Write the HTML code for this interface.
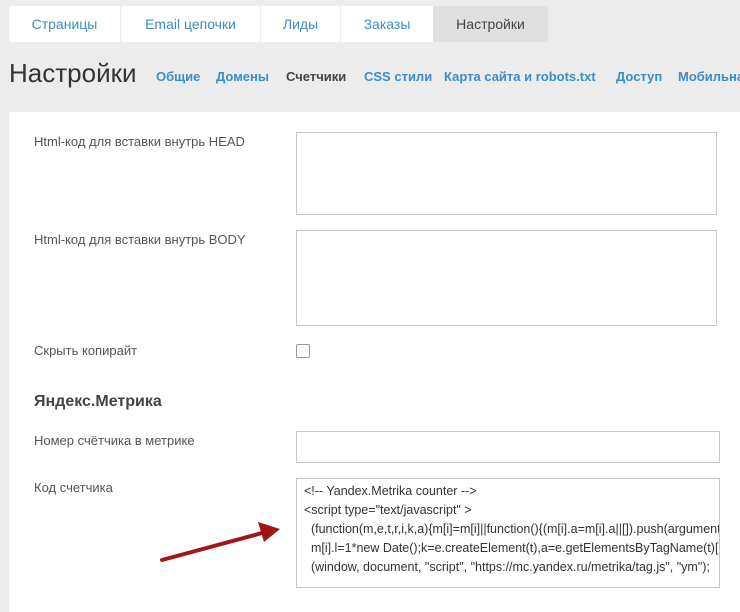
<!DOCTYPE html><html><head><meta charset="utf-8"><style>
body{margin:0;width:740px;height:600px;background:#ececec;font-family:"Liberation Sans",sans-serif;position:relative;overflow:hidden;}
.tab{position:absolute;top:6px;height:36px;line-height:36px;background:#fff;color:#3c8dc9;font-size:14px;text-align:center;}
.a{position:absolute;}
.lbl{position:absolute;left:34px;font-size:13px;color:#555;}
.ta{position:absolute;background:#fff;border:1px solid #c8c8c8;box-sizing:border-box;}
.sub{position:absolute;top:69px;font-size:13px;font-weight:bold;color:#3c8dc9;}
</style></head><body>
<div class="tab" style="left:9px;width:111px">Страницы</div>
<div class="tab" style="left:121px;width:139px">Email цепочки</div>
<div class="tab" style="left:261px;width:79px">Лиды</div>
<div class="tab" style="left:341px;width:92px">Заказы</div>
<div class="tab" style="left:433px;width:115px;background:#e0e0e0;color:#444">Настройки</div>
<div class="a" style="left:9px;top:58px;font-size:26px;color:#333">Настройки</div>
<div class="sub" style="left:156px">Общие</div>
<div class="sub" style="left:216px">Домены</div>
<div class="sub" style="left:286px;color:#444">Счетчики</div>
<div class="sub" style="left:364px">CSS стили</div>
<div class="sub" style="left:444px">Карта сайта и robots.txt</div>
<div class="sub" style="left:616px">Доступ</div>
<div class="sub" style="left:678px;white-space:nowrap">Мобильная</div>
<div class="a" style="left:9px;top:112px;width:740px;height:500px;background:#fff"></div>
<div class="lbl" style="top:134px">Html-код для вставки внутрь HEAD</div>
<div class="ta" style="left:296px;top:132px;width:421px;height:83px"></div>
<div class="lbl" style="top:232px">Html-код для вставки внутрь BODY</div>
<div class="ta" style="left:296px;top:230px;width:421px;height:96px"></div>
<div class="lbl" style="top:343px">Скрыть копирайт</div>
<div class="ta" style="left:296px;top:344px;width:14px;height:14px;border-color:#999;border-radius:2px"></div>
<div class="lbl" style="top:393px;font-size:16px;font-weight:bold;color:#444">Яндекс.Метрика</div>
<div class="lbl" style="top:433px">Номер счётчика в метрике</div>
<div class="ta" style="left:296px;top:431px;width:424px;height:32px"></div>
<div class="lbl" style="top:480px">Код счетчика</div>
<div class="ta" style="left:296px;top:478px;width:424px;height:110px;overflow:hidden;padding:3px 7px;font-size:12.5px;line-height:19px;color:#333;white-space:pre">&lt;!-- Yandex.Metrika counter --&gt;
&lt;script type="text/javascript" &gt;
  (function(m,e,t,r,i,k,a){m[i]=m[i]||function(){(m[i].a=m[i].a||[]).push(arguments)};
  m[i].l=1*new Date();k=e.createElement(t),a=e.getElementsByTagName(t)[0]
  (window, document, "script", "https://mc.yandex.ru/metrika/tag.js", "ym");</div>
<svg class="a" style="left:0;top:0" width="740" height="600"><path d="M162 560 L262 533" stroke="#a31414" stroke-width="4" stroke-linecap="round"/><path d="M280 529 L258 522 L264 542 Z" fill="#a31414"/></svg>
</body></html>
